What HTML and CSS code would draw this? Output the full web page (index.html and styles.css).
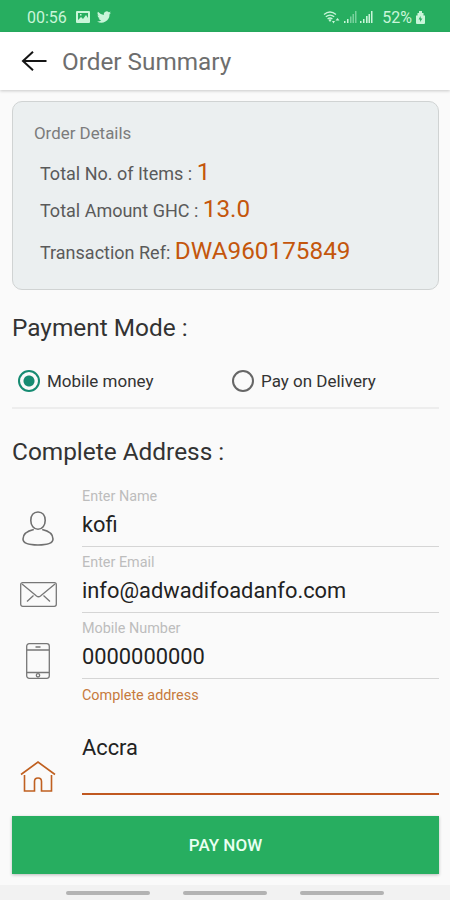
FILE: index.html
```html
<!DOCTYPE html>
<html lang="en">
<head>
    <meta charset="UTF-8">
    <meta name="viewport" content="width=device-width, initial-scale=1.0">
    <title>Order Summary</title>
    <link rel="stylesheet" href="styles.css">
</head>
<body>
    <div class="status-bar">
        <span class="time">00:56</span>
        <svg class="status-picture" width="14" height="12" viewBox="0 0 14 12">
            <path fill="currentColor" fill-rule="evenodd" d="M1 0h12a1 1 0 0 1 1 1v10a1 1 0 0 1-1 1H1a1 1 0 0 1-1-1V1a1 1 0 0 1 1-1zM2 2v7l3-3 2 2 3-4 2 3V2zM4 3h1.500v1.500H4z"/>
        </svg>
        <svg class="status-bird" width="14" height="12" viewBox="0 2 24 20">
            <path fill="currentColor" d="M24 4.600a10 10 0 0 1-2.800.8 5 5 0 0 0 2.100-2.700 10 10 0 0 1-3.100 1.200 4.900 4.900 0 0 0-8.400 4.500A14 14 0 0 1 1.700 3.200a4.900 4.900 0 0 0 1.500 6.500 5 5 0 0 1-2.200-.6 4.900 4.900 0 0 0 3.900 4.900 5 5 0 0 1-2.200.1 4.900 4.900 0 0 0 4.600 3.400A10 10 0 0 1 0 19.500a14 14 0 0 0 21.500-12.400A10 10 0 0 0 24 4.600z"/>
        </svg>
        <div class="status-right">
            <svg width="18" height="14" viewBox="0 0 18 14" fill="none" stroke="currentColor" stroke-width="1.300">
                <path d="M1 4.500q6-5 12 0M2.800 6.800q4.200-3.400 8.400 0M4.600 9q2.400-2 4.800 0"/>
                <path fill="currentColor" stroke="none" d="M5.500 10l1.500-1 1.500 1-1.500 2zM9 11h3l-1.500 2.500zM12.500 10.500h4L14.500 8z"/>
            </svg>
            <svg width="13" height="12" viewBox="0 0 13 12" fill="currentColor">
                <path d="M0 10h1.500v2H0zM3 8h1.500v4H3z"/>
                <path opacity=".5" d="M6 5.500h1.500V12H6zM8.500 3H10v9H8.500zM11 0h1.500v12H11z"/>
            </svg>
            <svg class="signal" width="13" height="12" viewBox="0 0 13 12" fill="currentColor">
                <path d="M0 10h1.500v2H0zM3 8h1.500v4H3zM6 5h1.600v7H6zM8.500 3H10v9H8.500z"/>
                <path d="M11 0h1.500v12H11z"/>
            </svg>
            <span class="battery">52%</span>
            <svg width="9" height="13" viewBox="0 0 9 13">
                <path fill="currentColor" fill-rule="evenodd" d="M3 0h3v2h1.500v2.500H9V12a1 1 0 0 1-1 1H1a1 1 0 0 1-1-1V4.500h1.500V2H3zM4.500 5L2.600 8.500h1.500V11l2.300-3.500H4.800z"/>
            </svg>
        </div>
    </div>

    <header class="app-bar">
        <svg class="back" width="26" height="20" viewBox="0 0 26 20" fill="none" stroke="#151515" stroke-width="2">
            <path d="M25.500 10H2M12 .8L2 10l10 9.200"/>
        </svg>
        <h1>Order Summary</h1>
    </header>

    <main>
        <section class="order-card">
            <h2>Order Details</h2>
            <p class="items">Total No. of Items : <b>1</b></p>
            <p class="amount">Total Amount GHC : <b>13.0</b></p>
            <p class="ref">Transaction Ref: <b>DWA960175849</b></p>
        </section>

        <h3 class="payment-title">Payment Mode :</h3>
        <div class="payment-modes">
            <label><span class="radio checked"></span><span>Mobile money</span></label>
            <label><span class="radio"></span><span>Pay on Delivery</span></label>
        </div>

        <h3 class="address-title">Complete Address :</h3>
        <div class="field">
            <svg class="icon-user" width="32" height="35" viewBox="0 0 32 35" fill="none" stroke="#707070" stroke-width="1.600">
                <path d="M16 1C11.500 1 8.800 4.500 8.800 9.500s3 8.700 7.200 8.700 7.200-3.700 7.200-8.700S20.500 1 16 1z"/>
                <path d="M11.800 18.500C5 20 1 22.500 1 28c0 4 6 6 15 6s15-2 15-6c0-5.500-4-8-10.800-9.500"/>
            </svg>
            <div class="input">
                <span class="label">Enter Name</span>
                <span class="value">kofi</span>
            </div>
        </div>
        <div class="field">
            <svg class="icon-mail" width="37" height="25" viewBox="0 0 37 25" fill="none" stroke="#777" stroke-width="1.300">
                <rect x=".7" y=".7" width="35.600" height="23.600" rx="2"/>
                <path d="M2 2l14.500 12q2 1.500 4 0L35 2M7 19.500l6.500-6M30 19.500l-6.500-6"/>
            </svg>
            <div class="input">
                <span class="label">Enter Email</span>
                <span class="value">info@adwadifoadanfo.com</span>
            </div>
        </div>
        <div class="field">
            <svg class="icon-phone" width="24" height="36" viewBox="0 0 24 36" fill="none" stroke="#777" stroke-width="1.300">
                <rect x=".7" y=".7" width="22.600" height="34.600" rx="2.500"/>
                <path d="M1 7h22M1 29.500h22M9.500 4h5"/>
                <circle cx="12" cy="32.300" r="1.700"/>
            </svg>
            <div class="input">
                <span class="label">Mobile Number</span>
                <span class="value">0000000000</span>
            </div>
        </div>
        <div class="field address">
            <svg class="icon-home" width="36" height="31" viewBox="0 0 36 31" fill="none" stroke="#c06020" stroke-width="1.600">
                <path d="M1 13.500L18 1l17 12.500"/>
                <path d="M4.500 14V30h10V20.500q0-3.500 3.500-3.500t3.500 3.500V30h10V14"/>
            </svg>
            <div class="input">
                <span class="label">Complete address</span>
                <span class="value">Accra</span>
            </div>
        </div>

        <button class="pay">PAY NOW</button>
    </main>

    <footer class="nav-bar">
        <span></span>
        <span></span>
        <span></span>
    </footer>
</body>
</html>
```

FILE: styles.css
```css
* {
    box-sizing: border-box;
}
body {
    font-family: Roboto, sans-serif;
    background-color: #fafafa;
    margin: 0;
    height: 900px;
    display: flex;
    flex-direction: column;
    overflow: hidden;
}
h1, h2, h3, p {
    margin: 0;
    font-weight: 400;
    white-space: nowrap;
}
svg {
    flex: none;
}
.status-bar {
    height: 32px;
    padding: 2px 25px 0 27px;
    background-color: #27ae60;
    color: #c9f5d9;
    display: flex;
    align-items: center;
    font-size: 16px;
}
.time {
    width: 49px;
}
.status-bird {
    margin-left: 7px;
}
.status-right {
    margin-left: auto;
    display: flex;
    align-items: center;
    gap: 3px;
}
.battery {
    margin: 0 1px 0 6px;
}
.app-bar {
    height: 58px;
    padding-left: 21px;
    background-color: #fff;
    display: flex;
    align-items: center;
    box-shadow: 0 1px 3px rgba(0, 0, 0, 0.2);
}
.app-bar h1 {
    margin: 1px 0 0 15px;
    color: #6e6e6e;
    font-size: 24.300px;
}
main {
    flex: 1;
    padding: 11px 11px 0 12px;
}
.order-card {
    height: 189px;
    padding: 21px 0 0 21px;
    background-color: #ebeff0;
    border: 1px solid #d0d3d3;
    border-radius: 10px;
    color: #5a5a5a;
    font-size: 18px;
}
.order-card h2 {
    font-size: 16.900px;
    line-height: 20px;
    color: #7c7c7c;
}
.order-card p {
    margin-left: 6px;
    line-height: 36px;
}
.order-card b {
    color: #c4560c;
    font-size: 24.300px;
    font-weight: 400;
}
.order-card .items {
    margin-top: 11px;
}
.order-card .amount {
    margin-top: -1px;
}
.order-card .ref {
    margin-top: 4px;
}
h3 {
    color: #333;
    font-size: 24.400px;
    line-height: 28px;
}
.payment-title {
    margin-top: 24px;
}
.payment-modes {
    margin-top: 24px;
    height: 43px;
    padding-left: 6px;
    display: flex;
    border-bottom: 2px solid #ededed;
}
.payment-modes label {
    width: 214px;
    height: 30px;
    flex: none;
    display: flex;
    align-items: center;
    gap: 7px;
    color: #333;
    font-size: 17px;
    white-space: nowrap;
}
.radio {
    width: 22px;
    height: 22px;
    flex: none;
    border: 2px solid #666;
    border-radius: 50%;
}
.radio.checked {
    border-color: #168b72;
    background: radial-gradient(circle, #168b72 5px, transparent 6px);
}
.address-title {
    margin-top: 29px;
}
.field {
    height: 66px;
    display: grid;
    grid-template-columns: 52px 1fr;
    column-gap: 18px;
    justify-items: center;
    align-items: end;
}
.address-title + .field {
    margin-top: 14px;
    height: 67px;
}
.icon-user {
    margin-bottom: 1px;
}
.icon-mail {
    margin-bottom: 6px;
}
.icon-home {
    margin-bottom: 3px;
}
.input {
    width: 100%;
    height: 61px;
    padding-top: 1px;
    display: flex;
    flex-direction: column;
    border-bottom: 1px solid #d5d5d5;
}
.label {
    color: #bdbdbd;
    font-size: 14.400px;
    line-height: 20px;
}
.value {
    margin-top: 6px;
    color: #222;
    font-size: 21.850px;
    line-height: 24px;
}
.field.address {
    height: 116px;
}
.address .input {
    height: 111px;
    border-bottom: 2px solid #c05820;
}
.address .label {
    margin-top: 1px;
    color: #c77a3d;
}
.address .value {
    margin-top: 30px;
}
.pay {
    display: block;
    width: 427px;
    height: 58px;
    margin-top: 21px;
    border: none;
    background-color: #27ae60;
    color: #e9fff2;
    box-shadow: 0 1px 3px rgba(0, 0, 0, 0.25);
    font-family: inherit;
    font-size: 17px;
    font-weight: 500;
}
.nav-bar {
    height: 15px;
    padding: 6px 0 0 66px;
    background-color: #f2f2f2;
    display: flex;
    gap: 33px;
}
.nav-bar span {
    width: 84px;
    height: 4px;
    border-radius: 2px;
    background-color: #b3b3b3;
}
```
